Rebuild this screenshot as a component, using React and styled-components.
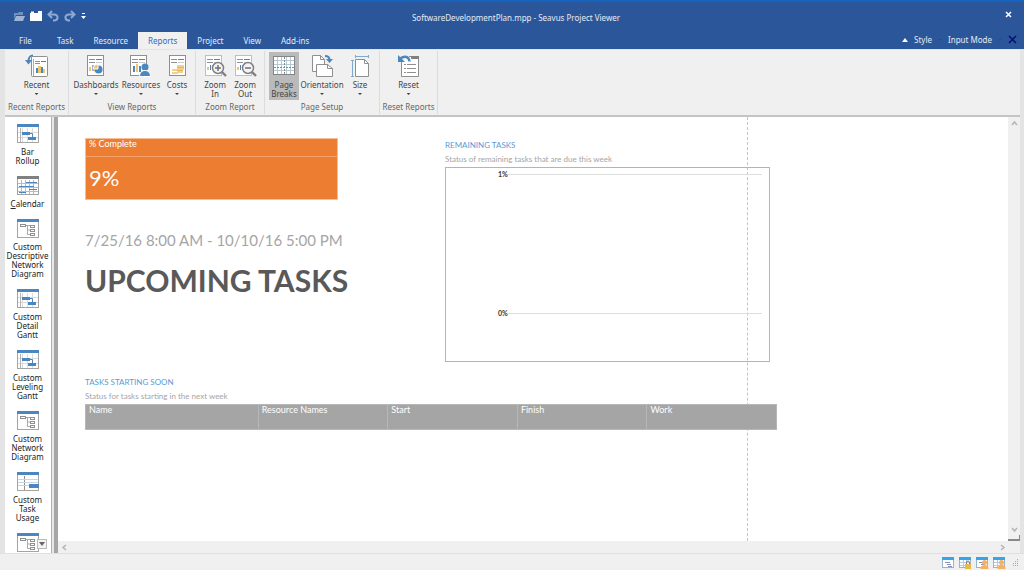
import styled, { createGlobalStyle, css } from 'styled-components'

const GlobalStyle = createGlobalStyle`
  * {
    box-sizing: border-box;
  }

  body {
    margin: 0;
    background: #f0f0f0;
    font-family: 'Noto Sans', 'Open Sans', sans-serif;
    font-size: 8px;
    line-height: 9px;
    color: #444;
  }

  button {
    margin: 0;
    padding: 0;
    border: 0;
    background: none;
    font: inherit;
    color: inherit;
  }

  svg {
    display: block;
    flex: none;
  }
`

const BLUE = '#4a86c0'
const LINE = '#8f8f8f'
const GOLD = '#f0c36d'

/* ---------- ribbon icons, 24 x 24 ---------- */

const Sheet = ({ x = 3, stroke = LINE }) => (
  <>
    <rect x={x + 0.5} y="1.5" width="16" height="20" fill="#fff" stroke={stroke} />
    <path d={`M${x + 2} 5.5h6M${x + 2} 8.5h6`} stroke={LINE} />
    <path d={`M${x + 9} 5.5h6`} stroke={BLUE} />
    <path d={`M${x + 9} 8.5h6`} stroke="#ccc" />
  </>
)

const Lens = ({ plus }) => (
  <>
    <circle cx="15" cy="14" r="5.5" fill="#f4f4f4" stroke="#808080" strokeWidth="1.5" />
    <path d="M19 18l4 4" stroke="#808080" strokeWidth="2.4" />
    <path d={plus ? 'M12 14h6M15 11v6' : 'M12 14h6'} stroke="#707070" strokeWidth="1.5" />
  </>
)

const ribbonIcons = {
  recent: (
    <>
      <rect x="6.5" y="2.5" width="16" height="20" rx="1" fill="#fff" stroke={LINE} />
      <path d="M8.5 5v17" stroke="#aaa" />
      <path d="M10 7.5h5M10 9.5h5" stroke={LINE} />
      <path d="M16 7.5h5" stroke={BLUE} />
      <path d="M11 14h2v5h-2zM16 13h2v6h-2z" fill={BLUE} />
      <path d="M13 12h3v7h-3zM18 15h2v4h-2z" fill={GOLD} />
      <path d="M8 1.5C4 1.5 3.5 4 3.5 8" fill="none" stroke={BLUE} strokeWidth="2" />
      <path d="M0 6l3.5 4.5L7 6z" fill={BLUE} />
    </>
  ),
  dashboards: (
    <>
      <Sheet />
      <path d="M5 13h2v4H5zM10 14h1v3h-1z" fill={GOLD} />
      <path d="M8 11h2v6H8z" fill="#9fb0d8" />
      <circle cx="14.5" cy="15.5" r="4" fill={BLUE} />
      <path d="M14 15V10a5 5 0 0 0-4.5 5z" fill={GOLD} stroke="#fff" />
    </>
  ),
  resources: (
    <>
      <Sheet x={1} />
      <path d="M4 12h2v6H4zM10 12h2v6h-2z" fill={BLUE} />
      <path d="M7 10h2v8H7z" fill={GOLD} />
      <circle cx="16" cy="13" r="3.5" fill={BLUE} />
      <path d="M10.5 22.5c0-4 2.5-6 5.5-6s5.5 2 5.5 6z" fill={BLUE} stroke="#fff" />
    </>
  ),
  costs: (
    <>
      <Sheet x={4} />
      <path d="M12 11h7v2h-7zM12 14h7v2h-7zM7 15h6v2H7zM12 17h6v2h-6zM7 18h6v2H7z" fill="#f3d08d" />
      <path d="M12 13.5h7M12 16.5h6" stroke="#e2b55d" />
    </>
  ),
  zoomIn: (
    <>
      <Sheet x={2} stroke="#a9c4d2" />
      <path d="M4 13h2v3H4z" fill={GOLD} />
      <path d="M7 11h1v5H7z" fill={BLUE} />
      <Lens plus />
    </>
  ),
  zoomOut: (
    <>
      <Sheet x={2} stroke="#a9c4d2" />
      <path d="M4 13h2v3H4z" fill={GOLD} />
      <path d="M7 11h1v5H7z" fill={BLUE} />
      <Lens />
    </>
  ),
  pageBreaks: (
    <>
      <rect x="1.5" y="2.5" width="21" height="18" fill="#fff" stroke="#858585" />
      <path d="M5.5 3v17M9.5 3v17M14.5 3v17M18.5 3v17M2 6.5h20M2 10.5h20M2 16.5h20" stroke="#b3cad6" />
      <path d="M12.5 3v17M2 13.5h20" stroke="#8a8a8a" strokeDasharray="2 1" />
    </>
  ),
  orientation: (
    <>
      <path d="M2.5 1.5h8l4 4v12h-12z" fill="#fff" stroke={LINE} />
      <path d="M10.5 1.5v4h4" fill="none" stroke={LINE} />
      <path d="M6.5 10.5h11l5 4v8h-16z" fill="#fff" stroke={LINE} />
      <path d="M17.5 10.5v4h5" fill="none" stroke={LINE} />
      <path d="M15 2c3 0 4.5 1 4.5 4" fill="none" stroke={BLUE} strokeWidth="2" />
      <path d="M16 5h7l-3.5 4z" fill={BLUE} />
    </>
  ),
  size: (
    <>
      <path d="M7.5 5.5h9l4 4v13h-13z" fill="#fff" stroke={LINE} />
      <path d="M16.5 5.5v4h4" fill="none" stroke={LINE} />
      <path d="M7 2.5h14M4.5 6v17" stroke="#7fa9d0" />
      <path d="M7.5 1v3M20.5 1v3M3 6.5h3M3 22.5h3" stroke="#7fa9d0" />
    </>
  ),
  reset: (
    <>
      <path d="M4.5 8v14.5h17v-20H12" fill="#fff" stroke={LINE} />
      <path d="M14 2h8v3h-8z" fill="#808080" />
      <path d="M7 10.5h2M7 14.5h2M7 18.5h2" stroke={LINE} />
      <path d="M10 10.5h9M10 14.5h9M10 18.5h9" stroke={LINE} />
      <path d="M3 4.5c5-3 9-2 9.5 3" fill="none" stroke={BLUE} strokeWidth="2.4" />
      <path d="M1 1v7h7z" fill={BLUE} />
    </>
  ),
}

const RibbonIcon = ({ name }) => (
  <svg width="24" height="24" viewBox="0 0 24 24">{ribbonIcons[name]}</svg>
)

/* ---------- view bar icons, 22 x 19 ---------- */

const viewIcons = {
  gantt: (
    <>
      <path d="M5.5 4v14M10.5 4v14M15.5 4v14M1 8.5h20M1 13.5h20" stroke="#dcdcdc" />
      <path d="M3.5 4v14" stroke="#b4b4b4" />
      <path d="M5 8h8v3H5zM11 13h8v3h-8z" fill={BLUE} />
      <path d="M13 9.5h2.5V13" fill="none" stroke={BLUE} />
    </>
  ),
  calendar: (
    <>
      <path d="M4.5 4v14M8.5 4v14M12.5 4v14M16.5 4v14M1 7.5h20M1 11.5h20M1 15.5h20" stroke="#bbb" />
      <path d="M9 6h11v1H9zM2 10h15v1H2zM12 13h8v1h-8zM2 16h7v1H2z" fill={BLUE} />
    </>
  ),
  network: (
    <>
      <path d="M8 6.5h6M10.5 6v9.5H14M10.5 11H14" fill="none" stroke="#aaa" />
      <rect x="3.5" y="5.5" width="5" height="2" fill="#fff" stroke={LINE} />
      <rect x="13.5" y="6.5" width="4" height="2" fill="#fff" stroke={LINE} />
      <rect x="13.5" y="10.5" width="4" height="2" fill="#fff" stroke={LINE} />
      <rect x="13.5" y="14.5" width="4" height="2" fill="#fff" stroke={LINE} />
    </>
  ),
  usage: (
    <>
      <path d="M7.5 4v14" stroke={LINE} />
      <path d="M1 7.5h20M1 10.5h20M1 13.5h20" stroke="#c5d6e6" />
      <path d="M12 12h10v4H12z" fill={BLUE} />
    </>
  ),
}

const ViewIcon = ({ name }) => (
  <svg width="22" height="19" viewBox="0 0 22 19">
    <rect x="0.5" y="0.5" width="21" height="18" fill="#fff" stroke="#a4a4a4" />
    {viewIcons[name]}
    <path d="M0 0h22v3H0z" fill={name === 'calendar' ? '#808080' : BLUE} />
  </svg>
)

/* ---------- status bar icons ---------- */

const StatusIcon = ({ badge, gantt }) => (
  <svg width="13" height="12" viewBox="0 0 13 12">
    <rect x="0.5" y="0.5" width="11" height="10" fill="#fff" stroke="#9ab4cb" />
    <path d="M0 0h12v3H0z" fill="#35a4ea" />
    {gantt ? (
      <path d="M3 5.5h5M5 7.5h4M6 9.5h4" stroke="#7e8fc4" />
    ) : (
      <path d="M1 5.5h10M1 8.5h10M4.5 3v7M7.5 3v7" stroke="#b9cbe0" />
    )}
    {badge === 'lock' && (
      <>
        <path d="M7.5 7V5.5a1.5 1.5 0 0 1 3 0V7" fill="none" stroke="#777" />
        <path d="M6 7h6v5H6z" fill="#e9b949" />
      </>
    )}
    {badge === 'user' && (
      <>
        <circle cx="8.5" cy="5.5" r="2.5" fill="#f3b164" />
        <path d="M4.5 12c0-3 1.5-4 4-4s4 1 4 4z" fill="#f3b164" />
      </>
    )}
  </svg>
)

const Chevron = ({ dir }) => (
  <svg width="7" height="7" viewBox="0 0 7 7">
    <path
      d={{
        up: 'M1 5l2.5-3L6 5',
        down: 'M1 2l2.5 3L6 2',
        left: 'M5 1L2 3.5 5 6',
        right: 'M2 1l3 2.5L2 6',
      }[dir]}
      fill="none"
      stroke="#b4b4b4"
      strokeWidth="1.5"
    />
  </svg>
)

const FolderIcon = ({ open }) => (
  <svg width="12" height="12" viewBox="0 0 12 12">
    {open ? (
      <>
        <path d="M1 9V3h4l1-1h4v3H3z" fill="#6f8fc2" />
        <path d="M1 11l2-5h9l-2 5z" fill="#9db3d8" />
      </>
    ) : (
      <path d="M0 11V3h1V1.5h3V3h4V1h4v10z" fill="#fff" />
    )}
  </svg>
)

const TurnIcon = ({ redo }) => (
  <svg width="12" height="12" viewBox="0 0 12 12">
    <g transform={redo ? 'translate(12 0) scale(-1 1)' : undefined} fill="none" stroke="#8fa9d0" strokeWidth="2">
      <path d="M5 1L1.5 4.5 5 8" />
      <path d="M2 4.5h5c5 0 4.5 6 0 6H6" />
    </g>
  </svg>
)

/* ---------- data ---------- */

const tabs = ['Task', 'Resource', 'Reports', 'Project', 'View', 'Add-ins']

const groups = [
  { label: 'Recent Reports', width: 64, items: [{ icon: 'recent', text: 'Recent', width: 46, menu: true }] },
  {
    label: 'View Reports',
    width: 127,
    items: [
      { icon: 'dashboards', text: 'Dashboards', width: 46, menu: true },
      { icon: 'resources', text: 'Resources', width: 44, menu: true },
      { icon: 'costs', text: 'Costs', width: 28, menu: true },
    ],
  },
  {
    label: 'Zoom Report',
    width: 69,
    items: [
      { icon: 'zoomIn', text: 'Zoom In', width: 30 },
      { icon: 'zoomOut', text: 'Zoom Out', width: 30 },
    ],
  },
  {
    label: 'Page Setup',
    width: 115,
    items: [
      { icon: 'pageBreaks', text: 'Page Breaks', width: 30, pressed: true },
      { icon: 'orientation', text: 'Orientation', width: 46, menu: true },
      { icon: 'size', text: 'Size', width: 30, menu: true },
    ],
  },
  { label: 'Reset Reports', width: 58, items: [{ icon: 'reset', text: 'Reset', width: 30, menu: true }] },
]

const views = [
  { icon: 'gantt', text: 'Bar\nRollup' },
  { icon: 'calendar', text: <><u>C</u>alendar</> },
  { icon: 'network', text: 'Custom\nDescriptive\nNetwork\nDiagram' },
  { icon: 'gantt', text: 'Custom\nDetail\nGantt' },
  { icon: 'gantt', text: 'Custom\nLeveling\nGantt' },
  { icon: 'network', text: 'Custom\nNetwork\nDiagram' },
  { icon: 'usage', text: 'Custom\nTask\nUsage' },
]

const columns = ['Name', 'Resource Names', 'Start', 'Finish', 'Work']

export default function App() {
  return (
    <Window>
      <GlobalStyle />
      <TitleBar>
        <QuickAccess>
          <button aria-label="Open"><FolderIcon open /></button>
          <button aria-label="Close file"><FolderIcon /></button>
          <button aria-label="Undo"><TurnIcon /></button>
          <button aria-label="Redo"><TurnIcon redo /></button>
          <button aria-label="Customize">
            <svg width="5" height="6" viewBox="0 0 5 6">
              <path d="M1 0h3v1H1zM0 3h5L2.5 6z" fill="#fff" />
            </svg>
          </button>
        </QuickAccess>
        <Title>SoftwareDevelopmentPlan.mpp - Seavus Project Viewer</Title>
        <CloseWindow aria-label="Close">
          <svg width="7" height="7" viewBox="0 0 7 7">
            <path d="M1 1l5 5M6 1L1 6" stroke="#fff" strokeWidth="1.5" />
          </svg>
        </CloseWindow>
      </TitleBar>

      <TabBar>
        <FileTab>File</FileTab>
        {tabs.map((tab) => (
          <Tab key={tab} $active={tab === 'Reports'}>{tab}</Tab>
        ))}
        <TabTools>
          <ToolButton>
            <svg width="6" height="4" viewBox="0 0 6 4"><path d="M0 4l3-4 3 4z" fill="#fff" /></svg>
            Style
            <MenuArrow />
          </ToolButton>
          <ToolButton>
            Input Mode
            <MenuArrow />
          </ToolButton>
          <button aria-label="Close document">
            <svg width="9" height="9" viewBox="0 0 9 9">
              <path d="M1 1l7 7M8 1L1 8" stroke="#00106e" strokeWidth="1.5" />
            </svg>
          </button>
        </TabTools>
      </TabBar>

      <Frame>
        <Ribbon>
          {groups.map((group) => (
            <Group key={group.label} $width={group.width}>
              <GroupItems>
                {group.items.map((item) => (
                  <RibbonButton key={item.text} $width={item.width} $pressed={item.pressed}>
                    <RibbonIcon name={item.icon} />
                    <span>{item.text}</span>
                    {item.menu && <MenuArrow />}
                  </RibbonButton>
                ))}
              </GroupItems>
              <GroupLabel>{group.label}</GroupLabel>
            </Group>
          ))}
        </Ribbon>

        <Workspace>
          <ViewBar>
            {views.map((view, i) => (
              <ViewButton key={i}>
                <ViewIcon name={view.icon} />
                <span>{view.text}</span>
              </ViewButton>
            ))}
            <ViewButton aria-label="Descriptive Network Diagram">
              <ViewIcon name="network" />
            </ViewButton>
            <MoreViews aria-label="More views">
              <svg width="6" height="4" viewBox="0 0 6 4"><path d="M0 0h6L3 4z" fill="#666" /></svg>
            </MoreViews>
          </ViewBar>
          <Splitter />
          <Viewport>
            <Canvas>
              <PageBreak />
              <Report>
                <TopRow>
                  <Summary>
                    <Tile>
                      <TileLabel>% Complete</TileLabel>
                      <TileValue>9%</TileValue>
                    </Tile>
                    <Dates>7/25/16 8:00 AM - 10/10/16 5:00 PM</Dates>
                    <Heading>UPCOMING TASKS</Heading>
                  </Summary>
                  <ChartBlock>
                    <SectionTitle>REMAINING TASKS</SectionTitle>
                    <SectionNote>Status of remaining tasks that are due this week</SectionNote>
                    <Chart>
                      <Tick>1%</Tick>
                      <Tick>0%</Tick>
                    </Chart>
                  </ChartBlock>
                </TopRow>
                <SectionTitle>TASKS STARTING SOON</SectionTitle>
                <SectionNote>Status for tasks starting in the next week</SectionNote>
                <Table>
                  <thead>
                    <tr>
                      {columns.map((column) => <th key={column}>{column}</th>)}
                    </tr>
                  </thead>
                </Table>
              </Report>
            </Canvas>
            <ScrollColumn>
              <ScrollButton aria-label="Scroll up"><Chevron dir="up" /></ScrollButton>
              <ScrollEnd>
                <ScrollButton aria-label="Scroll down"><Chevron dir="down" /></ScrollButton>
                <SplitHandle />
              </ScrollEnd>
            </ScrollColumn>
            <ScrollRow>
              <ScrollButton aria-label="Scroll left"><Chevron dir="left" /></ScrollButton>
              <ScrollButton aria-label="Scroll right"><Chevron dir="right" /></ScrollButton>
            </ScrollRow>
          </Viewport>
        </Workspace>
      </Frame>

      <StatusBar>
        <button aria-label="Gantt chart"><StatusIcon gantt /></button>
        <button aria-label="Task usage"><StatusIcon badge="lock" /></button>
        <button aria-label="Team planner"><StatusIcon gantt badge="user" /></button>
        <button aria-label="Resource sheet"><StatusIcon badge="user" /></button>
        <Grip width="7" height="7" viewBox="0 0 7 7">
          <path d="M5 0h1v1H5zM3 2h1v1H3zM5 2h1v1H5zM1 4h1v1H1zM3 4h1v1H3zM5 4h1v1H5zM1 6h1v1H1zM3 6h1v1H3zM5 6h1v1H5z" fill="#aaa" />
        </Grip>
      </StatusBar>
    </Window>
  )
}

const Window = styled.div`
  display: flex;
  flex-direction: column;
  height: 100vh;
  overflow: hidden;
`

const TitleBar = styled.header`
  display: grid;
  grid-template-columns: 1fr auto 1fr;
  align-items: center;
  flex: none;
  height: 32px;
  padding: 0 12px 0 13px;
  border-top: 2px solid #1565c0;
  background: #2b579a;
  color: #e4ebf5;
`

const QuickAccess = styled.div`
  display: flex;
  align-items: center;
  gap: 5px;
  padding-bottom: 2px;
`

const Title = styled.div`
  padding: 1px 0 0 7px;
`

const CloseWindow = styled.button`
  justify-self: end;
  padding-bottom: 6px;
`

const TabBar = styled.nav`
  display: flex;
  flex: none;
  height: 17px;
  padding: 0 7px 0 4px;
  background: #2b579a;
  color: #e4ebf5;
`

const Tab = styled.button`
  padding: 0 10px;

  ${(p) => p.$active && css`
    background: #f0f0f0;
    color: #2b6cc4;
  `}
`

const FileTab = styled(Tab)`
  width: 43px;
`

const TabTools = styled.div`
  display: flex;
  align-items: center;
  gap: 6px;
  margin-left: auto;
  padding-bottom: 2px;
`

const ToolButton = styled.button`
  display: flex;
  align-items: center;
  gap: 6px;
`

const MenuArrow = styled.i`
  width: 4px;
  height: 2px;
  background: #444;
  clip-path: polygon(0 0, 100% 0, 50% 100%);
`

const Frame = styled.main`
  display: flex;
  flex-direction: column;
  flex: 1;
  min-height: 0;
  border: solid #e4e4e4;
  border-width: 1px 4px 0 5px;
`

const Ribbon = styled.div`
  display: flex;
  flex: none;
  height: 67px;
  border-bottom: 2px solid #c4c4c4;
`

const Group = styled.section`
  display: flex;
  flex-direction: column;
  justify-content: space-between;
  width: ${(p) => p.$width}px;
  margin: 1px 0;
  padding: 1px 0 3px;
  border-right: 1px solid #dcdcdc;
`

const GroupItems = styled.div`
  display: flex;
  justify-content: center;
`

const GroupLabel = styled.div`
  color: #666;
  text-align: center;
  white-space: nowrap;
`

const RibbonButton = styled.button`
  display: flex;
  flex-direction: column;
  align-items: center;
  gap: 2px;
  width: ${(p) => p.$width}px;
  height: 48px;
  padding-top: 2px;
  background: ${(p) => (p.$pressed ? '#bababa' : 'none')};

  ${MenuArrow} {
    margin-top: 2px;
  }
`

const Workspace = styled.div`
  display: flex;
  flex: 1;
  min-height: 0;
`

const ViewBar = styled.aside`
  position: relative;
  flex: none;
  width: 47px;
  padding-top: 7px;
  overflow: hidden;
  border-right: 1px solid #b0b0b0;
  background: #fff;
  color: #222;
`

const ViewButton = styled.button`
  display: flex;
  flex-direction: column;
  align-items: center;
  gap: 4px;
  width: 45px;
  padding-bottom: 11px;
  white-space: pre-line;
`

const MoreViews = styled.button`
  position: absolute;
  right: 4px;
  bottom: 4px;
  display: grid;
  place-items: center;
  width: 10px;
  height: 10px;
  border: 1px solid #bbb;
  background: #f4f4f4;
`

const Splitter = styled.div`
  width: 6px;
  border-left: 2px solid #e8e8e8;
  background: #a6a6a6;
`

const Viewport = styled.div`
  display: grid;
  grid-template-rows: 1fr 12px;
  grid-template-columns: 1fr 12px;
  flex: 1;
  min-width: 0;
`

const Canvas = styled.div`
  position: relative;
  min-height: 0;
  overflow: hidden;
  background: #fff;
`

const Report = styled.div`
  position: relative;
  width: 719px;
  padding: 21px 0 0 27px;
  font-family: Lato, sans-serif;
`

const PageBreak = styled.div`
  position: absolute;
  top: 0;
  bottom: 0;
  left: 689px;
  border-left: 1px dashed #c4c4c4;
`

const TopRow = styled.div`
  display: grid;
  grid-template-columns: 253px 325px;
  justify-content: space-between;
  height: 239px;
  padding-right: 7px;
`

const Summary = styled.div`
  white-space: nowrap;
`

const Tile = styled.div`
  border: 1px solid #f6bd97;
  background: #ed7d31;
  color: #fff;
`

const TileLabel = styled.div`
  height: 18px;
  padding: 0 3px;
  border-bottom: 1px solid #f3a26e;
  font-size: 9px;
  line-height: 10px;
`

const TileValue = styled.div`
  height: 42px;
  padding: 0 3px;
  font-size: 22px;
  line-height: 42px;
`

const Dates = styled.div`
  margin-top: 29px;
  color: #a5a5a5;
  font-size: 15px;
  line-height: 22px;
`

const Heading = styled.h1`
  margin: 7px 0 0;
  color: #595959;
  font-size: 30px;
  font-weight: 700;
  line-height: 44px;
`

const ChartBlock = styled.section`
  padding-top: 2px;
`

const SectionTitle = styled.h2`
  margin: 0;
  color: #5b9bd5;
  font-size: 8px;
  font-weight: 400;
  line-height: 10px;
`

const SectionNote = styled.p`
  margin: 4px 0 3px;
  color: #a5a5a5;
  font-size: 8px;
  line-height: 10px;
`

const Chart = styled.div`
  display: flex;
  flex-direction: column;
  gap: 129px;
  height: 195px;
  padding: 1px 7px 0 52px;
  border: 1px solid #b4b4b4;
`

const Tick = styled.div`
  display: flex;
  align-items: center;
  color: #333;
  font-size: 7px;
  font-weight: 700;
  line-height: 10px;

  &::after {
    content: '';
    flex: 1;
    height: 1px;
    background: #dedede;
  }
`

const Table = styled.table`
  width: 692px;
  border-collapse: collapse;
  table-layout: fixed;
  background: #a5a5a5;
  color: #fff;

  th {
    height: 25px;
    padding: 0 3px;
    border: 1px solid #b7b7b7;
    font-size: 9px;
    font-weight: 400;
    line-height: 10px;
    text-align: left;
    vertical-align: top;
  }

  th:first-child {
    width: 25%;
  }
`

const ScrollColumn = styled.div`
  display: flex;
  flex-direction: column;
  justify-content: space-between;
  background: #f0f0f0;
`

const ScrollEnd = styled.div`
  display: flex;
  flex-direction: column;
`

const SplitHandle = styled.div`
  height: 6px;
  border: solid #888;
  border-width: 0 1px 2px 0;
`

const ScrollRow = styled.div`
  display: flex;
  justify-content: space-between;
  background: #f0f0f0;
`

const ScrollButton = styled.button`
  display: grid;
  place-items: center;
  width: 12px;
  height: 12px;
`

const StatusBar = styled.footer`
  display: flex;
  align-items: center;
  justify-content: flex-end;
  gap: 4px;
  flex: none;
  height: 17px;
  padding: 1px 5px 0;
  border-top: 1px solid #e0e0e0;
`

const Grip = styled.svg`
  margin-left: 2px;
`
